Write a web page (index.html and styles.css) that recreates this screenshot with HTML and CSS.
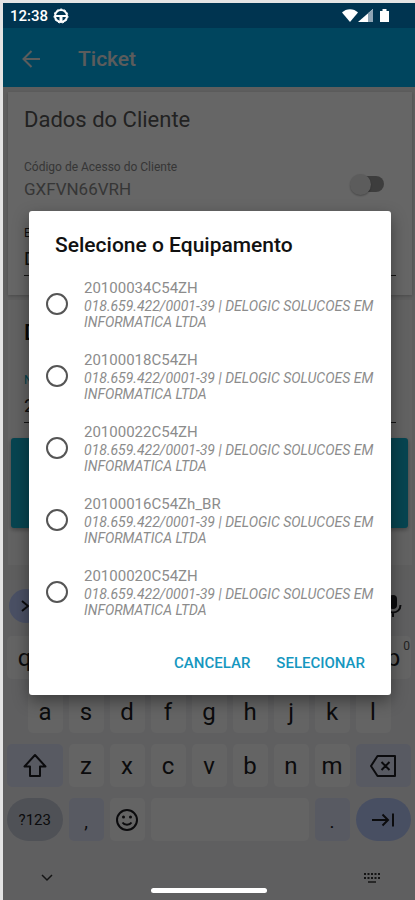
FILE: index.html
```html
<!DOCTYPE html>
<html lang="pt-BR">
<head>
    <meta charset="UTF-8">
    <meta name="viewport" content="width=device-width, initial-scale=1.0">
    <title>Ticket</title>
    <link rel="stylesheet" href="styles.css">
</head>
<body>

<div class="screen">
    <!-- Status bar -->
    <div class="status-bar">
        <span class="clock">12:38</span>
        <svg class="status-app" width="16" height="16" viewBox="0 0 16 16">
            <circle cx="8" cy="8" r="6" fill="none" stroke="#fff" stroke-width="2"/>
            <circle cx="8" cy="8" r="7" fill="none" stroke="#fff" stroke-width="1" stroke-dasharray="2 2"/>
            <path d="M3 7h10v2H9.500v4h-3V9H3z" fill="#fff"/>
        </svg>
        <svg class="status-icons" width="50" height="16" viewBox="0 0 50 16">
            <path d="M1 4.500C5 0 13 0 17 4.500L9 14z" fill="#fff"/>
            <path d="M17 14L32 1v13z" fill="#fff"/>
            <path d="M27 5.300L32 1v13h-5z" fill="#8fa5b5"/>
            <path d="M39 3h2.500V1h4v2H48v11h-9z" fill="#fff"/>
        </svg>
    </div>

    <header class="app-bar">
        <button class="back-btn" aria-label="Voltar">
            <svg width="24" height="24" viewBox="0 0 24 24" fill="none" stroke="currentColor" stroke-width="2">
                <path d="M21 12H5M12.500 4L4.500 12l8 8"/>
            </svg>
        </button>
        <h1>Ticket</h1>
    </header>

    <main class="content">
        <section class="card">
            <h2>Dados do Cliente</h2>
            <div class="client-row">
                <div class="field">
                    <label for="codigo">Código de Acesso do Cliente</label>
                    <input type="text" id="codigo" value="GXFVN66VRH">
                </div>
                <input type="checkbox" class="switch" aria-label="Código de Acesso do Cliente">
            </div>
            <div class="line-field">
                <label for="nome">E</label>
                <input type="text" id="nome" value="D">
            </div>
        </section>

        <section class="card card-second">
            <h2>D</h2>
            <div class="line-field active">
                <label for="equip">N</label>
                <input type="text" id="equip" value="2">
            </div>
        </section>
        <button class="submit-btn" aria-label="Enviar"></button>
    </main>

    <!-- Keyboard -->
    <div class="keyboard">
        <div class="kb-tools">
            <button class="kb-expand" aria-label="Mais">
                <svg width="12" height="14" viewBox="0 0 12 14" fill="none" stroke="currentColor" stroke-width="2"><path d="M2 2l6 5-6 5"/></svg>
            </button>
            <button class="kb-mic" aria-label="Microfone">
                <svg width="20" height="24" viewBox="0 0 20 24">
                    <rect x="6" y="1" width="8" height="14" rx="4" fill="currentColor"/>
                    <path d="M2.500 11c0 10 15 10 15 0M10 18v5" fill="none" stroke="currentColor" stroke-width="2"/>
                </svg>
            </button>
        </div>
        <div class="kb-row">
            <button class="key">q</button>
            <button class="key" aria-label="w"></button>
            <button class="key" aria-label="e"></button>
            <button class="key" aria-label="r"></button>
            <button class="key" aria-label="t"></button>
            <button class="key" aria-label="y"></button>
            <button class="key" aria-label="u"></button>
            <button class="key" aria-label="i"></button>
            <button class="key" aria-label="o"></button>
            <button class="key">p<sup>0</sup></button>
        </div>
        <div class="kb-row kb-middle">
            <button class="key">a</button>
            <button class="key">s</button>
            <button class="key">d</button>
            <button class="key">f</button>
            <button class="key">g</button>
            <button class="key">h</button>
            <button class="key">j</button>
            <button class="key">k</button>
            <button class="key">l</button>
        </div>
        <div class="kb-row">
            <button class="key wide tinted" aria-label="Shift">
                <svg width="26" height="26" viewBox="0 0 26 26" fill="none" stroke="currentColor" stroke-width="2" stroke-linejoin="round">
                    <path d="M13 2L2.500 13.500H8V23h10v-9.500h5.500z"/>
                </svg>
            </button>
            <button class="key">z</button>
            <button class="key">x</button>
            <button class="key">c</button>
            <button class="key">v</button>
            <button class="key">b</button>
            <button class="key">n</button>
            <button class="key">m</button>
            <button class="key wide tinted" aria-label="Apagar">
                <svg width="28" height="24" viewBox="0 0 28 24" fill="none" stroke="currentColor" stroke-width="2" stroke-linejoin="round">
                    <path d="M8.500 2H26v20H8.500L2 12zM12.500 8l8 8M20.500 8l-8 8"/>
                </svg>
            </button>
        </div>
        <div class="kb-row">
            <button class="key wide round symbols">?123</button>
            <button class="key tinted punct">,</button>
            <button class="key" aria-label="Emoji">
                <svg width="24" height="24" viewBox="0 0 24 24" fill="none" stroke="currentColor" stroke-width="2">
                    <circle cx="12" cy="12" r="10"/>
                    <path d="M7.500 14.500c2 3 7 3 9 0"/>
                    <circle cx="8.500" cy="9" r="1.500" fill="currentColor" stroke="none"/>
                    <circle cx="15.500" cy="9" r="1.500" fill="currentColor" stroke="none"/>
                </svg>
            </button>
            <button class="key space" aria-label="Espaço"></button>
            <button class="key tinted punct">.</button>
            <button class="key wide round enter" aria-label="Próximo">
                <svg width="24" height="16" viewBox="0 0 24 16" fill="none" stroke="currentColor" stroke-width="2">
                    <path d="M1 8h16M11.500 2.500L17 8l-5.500 5.500M22 1.500v13"/>
                </svg>
            </button>
        </div>
        <div class="kb-nav">
            <svg width="12" height="8" viewBox="0 0 12 8" fill="none" stroke="currentColor" stroke-width="1.500"><path d="M1 1l5 5 5-5"/></svg>
            <svg width="18" height="12" viewBox="0 0 18 12" fill="none" stroke="currentColor" stroke-width="2">
                <path d="M1 2h16M1 6h16" stroke-dasharray="2 1.500"/>
                <path d="M5 10h8" stroke-width="1.500"/>
            </svg>
        </div>
    </div>

    <!-- Dialog -->
    <div class="overlay">
        <form class="dialog" role="dialog" aria-labelledby="dialogTitle">
            <h2 id="dialogTitle">Selecione o Equipamento</h2>
            <div class="options">
                <label class="option">
                    <input type="radio" name="equipamento">
                    <span class="option-text"><span class="serial">20100034C54ZH</span><em>018.659.422/0001-39 | DELOGIC SOLUCOES EM INFORMATICA LTDA</em></span>
                </label>
                <label class="option">
                    <input type="radio" name="equipamento">
                    <span class="option-text"><span class="serial">20100018C54ZH</span><em>018.659.422/0001-39 | DELOGIC SOLUCOES EM INFORMATICA LTDA</em></span>
                </label>
                <label class="option">
                    <input type="radio" name="equipamento">
                    <span class="option-text"><span class="serial">20100022C54ZH</span><em>018.659.422/0001-39 | DELOGIC SOLUCOES EM INFORMATICA LTDA</em></span>
                </label>
                <label class="option">
                    <input type="radio" name="equipamento">
                    <span class="option-text"><span class="serial">20100016C54Zh_BR</span><em>018.659.422/0001-39 | DELOGIC SOLUCOES EM INFORMATICA LTDA</em></span>
                </label>
                <label class="option">
                    <input type="radio" name="equipamento">
                    <span class="option-text"><span class="serial">20100020C54ZH</span><em>018.659.422/0001-39 | DELOGIC SOLUCOES EM INFORMATICA LTDA</em></span>
                </label>
            </div>
            <div class="dialog-actions">
                <button type="button">CANCELAR</button>
                <button type="button">SELECIONAR</button>
            </div>
        </form>
    </div>
    <div class="home-pill"></div>
</div>

</body>
</html>
```

FILE: styles.css
```css
/* General Reset */
* {
    margin: 0;
    padding: 0;
    box-sizing: border-box;
}
body {
    font-family: Roboto, "Liberation Sans", sans-serif;
    background-color: #e4e4e4;
    padding: 3px 0 0 3px;
}
button, input {
    font-family: inherit;
    border: none;
    background: none;
    color: inherit;
}
svg {
    display: block;
}
.screen {
    position: relative;
    display: flex;
    flex-direction: column;
    min-height: calc(100vh - 3px);
    background-color: #ebebeb;
}

/* Status Bar */
.status-bar {
    position: relative;
    z-index: 2;
    display: flex;
    align-items: center;
    height: 25px;
    padding: 0 24px 0 7px;
    background-color: #003450;
    color: #fff;
}
.clock {
    font-size: 15px;
    font-weight: 500;
}
.status-app {
    margin-left: 5px;
}
.status-icons {
    margin-left: auto;
}

/* App Bar */
.app-bar {
    display: flex;
    align-items: center;
    height: 59px;
    padding: 2px 16px 0;
    gap: 35px;
    background-color: #00adeb;
    color: #e6e6e6;
}
.app-bar h1 {
    font-size: 21px;
    font-weight: 500;
}

/* Page Content */
.content {
    flex: 1;
    padding: 5px 3px 0 5px;
}
.card {
    height: 203px;
    padding: 14px 16px;
    background-color: #fff;
    box-shadow: 0 1px 3px rgba(0, 0, 0, 0.2);
}
.card h2 {
    font-size: 22px;
    font-weight: 400;
    line-height: 28px;
    color: #555;
}
.client-row {
    display: flex;
    align-items: center;
    justify-content: space-between;
    margin-top: 24px;
    padding-right: 12px;
    color: #888;
}
.field label, .line-field label {
    display: block;
    font-size: 12px;
    line-height: 18px;
}
.field input {
    width: 100%;
    font-size: 17px;
    line-height: 26px;
}
.switch {
    appearance: none;
    display: flex;
    align-items: center;
    width: 34px;
    height: 16px;
    margin-top: 8px;
    border-radius: 8px;
    background: linear-gradient(to right, transparent 8px, #999 8px);
}
.switch::before {
    content: "";
    width: 21px;
    height: 21px;
    flex-shrink: 0;
    border-radius: 50%;
    background-color: #e6e6e6;
    box-shadow: 0 1px 2px rgba(0, 0, 0, 0.3);
}
.line-field {
    margin-top: 22px;
    color: #222;
}
.line-field input {
    display: block;
    width: 100%;
    height: 34px;
    font-size: 19px;
    border-bottom: 1px solid #333;
}
.card-second {
    margin-top: 5px;
    height: 265px;
    padding-top: 19px;
    box-shadow: none;
    background-color: #f6f6f6;
}
.card-second h2 {
    color: #111;
    font-weight: 500;
}
.card-second .line-field {
    margin-top: 24px;
}
.active label {
    color: #00a0b8;
}
.submit-btn {
    display: block;
    width: calc(100% - 7px);
    height: 90px;
    margin: -127px 4px 0 3px;
    border-radius: 3px;
    background-color: #12aac8;
    box-shadow: 0 2px 4px rgba(0, 0, 0, 0.3);
}

/* Keyboard */
.keyboard {
    padding: 0 4px;
    background-color: #eeeef1;
    color: #1c1c22;
}
.kb-tools {
    display: flex;
    align-items: center;
    justify-content: space-between;
    height: 56px;
    padding: 0 8px 4px 2px;
}
.kb-expand {
    display: flex;
    align-items: center;
    justify-content: center;
    width: 34px;
    height: 34px;
    border-radius: 50%;
    background-color: #b9c9fa;
}
.kb-row {
    display: grid;
    grid-template-columns: repeat(20, 1fr);
    gap: 6px;
    margin-bottom: 11px;
}
.key {
    grid-column: span 2;
    display: flex;
    align-items: center;
    justify-content: center;
    position: relative;
    min-width: 0;
    height: 43px;
    border-radius: 5px;
    background-color: #fafafa;
    font-size: 24px;
}
.key sup {
    position: absolute;
    top: 3px;
    right: 1px;
    font-size: 12px;
    color: #555;
}
.kb-middle .key:first-child {
    grid-column: 2 / span 2;
}
.key.wide {
    grid-column: span 3;
}
.key.space {
    grid-column: span 8;
}
.key.tinted {
    background-color: #dde1f5;
}
.key.punct {
    padding-top: 4px;
    font-size: 19px;
}
.key.round {
    border-radius: 22px;
}
.key.symbols {
    background-color: #c5cad6;
    font-size: 15px;
}
.key.enter {
    background-color: #b4c5f5;
}
.kb-nav {
    display: flex;
    align-items: center;
    justify-content: space-between;
    height: 48px;
    padding: 4px 30px 0 34px;
    color: #333;
}

/* Dialog */
.overlay {
    position: absolute;
    inset: 0;
    display: flex;
    justify-content: center;
    align-items: flex-start;
    padding: 208px 24px 0 26px;
    background-color: rgba(0, 0, 0, 0.6);
}
.dialog {
    width: 100%;
    padding: 20px 14px 20px 17px;
    border-radius: 3px;
    background-color: #fff;
    box-shadow: 0 6px 16px rgba(0, 0, 0, 0.4);
}
.dialog h2 {
    padding-left: 9px;
    font-size: 21px;
    font-weight: 500;
    line-height: 28px;
    color: #111;
}
.options {
    margin-top: 19px;
}
.option {
    display: flex;
    align-items: center;
    gap: 16px;
    margin-bottom: 20px;
    cursor: pointer;
}
.option input {
    appearance: none;
    flex-shrink: 0;
    width: 22px;
    height: 22px;
    border: 2px solid #555;
    border-radius: 50%;
}
.option input:checked {
    border-color: #0e97c4;
}
.option-text {
    font-size: 14px;
    line-height: 16px;
    color: #8c8c8c;
}
.serial {
    display: block;
    font-size: 15px;
    line-height: 20px;
}
.dialog-actions {
    display: flex;
    justify-content: flex-end;
    gap: 26px;
    padding-right: 12px;
    margin-top: 33px;
}
.dialog-actions button {
    font-size: 15px;
    font-weight: 500;
    line-height: 24px;
    color: #1597bf;
    cursor: pointer;
}

/* Home gesture bar */
.home-pill {
    position: absolute;
    bottom: 7px;
    left: 50%;
    width: 116px;
    height: 5px;
    transform: translateX(-50%);
    border-radius: 3px;
    background-color: #fff;
}
```
